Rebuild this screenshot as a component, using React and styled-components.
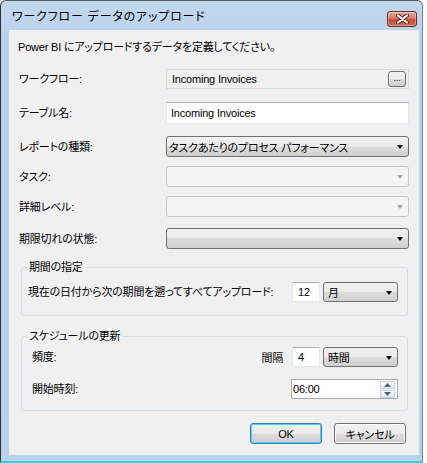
import React from 'react';
import styled, { createGlobalStyle } from 'styled-components';

const uiFont = `"Liberation Sans", "Noto Sans CJK JP", sans-serif`;

const GlobalStyle = createGlobalStyle`
    html, body {
        margin: 0;
        padding: 0;
        background: #ffffff;
    }
    body {
        font-family: ${uiFont};
        font-size: 11px;
        color: #000000;
        font-feature-settings: "palt";
        letter-spacing: -0.2px;
    }
`;

const Window = styled.div`
    box-sizing: border-box;
    width: 423px;
    height: 463px;
    display: flex;
    flex-direction: column;
    background: linear-gradient(#c3d8ef, #bad2eb 40px, #b9d1ea);
    border-left: 1px solid #2e3338;
    border-top: 1px solid #4d5862;
    border-right: 1px solid #6f8398;
    border-bottom: 2px solid #27d4e6;
    border-radius: 6px 6px 0 0;
`;

const TitleBar = styled.div`
    height: 29px;
    display: flex;
    align-items: flex-start;
    justify-content: space-between;
    padding-left: 11px;
`;

const Title = styled.div`
    font-size: 12px;
    line-height: 14px;
    margin-top: 9px;
    letter-spacing: 0.8px;
`;

const CloseButton = styled.div`
    box-sizing: border-box;
    width: 30px;
    height: 16px;
    margin-top: 10px;
    margin-right: 5px;
    display: flex;
    align-items: center;
    justify-content: center;
    border: 1px solid #6b2e28;
    border-radius: 3px;
    background: linear-gradient(#e9a99c, #d47a69 45%, #c24e38 55%, #cf6a52);
    box-shadow: inset 0 0 0 1px rgba(255, 255, 255, 0.35);
`;

const Client = styled.div`
    flex: 1;
    margin: 0 3px 6px 8px;
    background: #f0f0f0;
    padding: 10px 10px 0 9px;
    display: flex;
    flex-direction: column;
`;

const Intro = styled.div`
    line-height: 14px;
    margin-bottom: 15px;
`;

const FieldRow = styled.div`
    display: grid;
    grid-template-columns: 147px 1fr;
    align-items: center;
    margin-top: ${p => p.$mt || 0}px;
    padding-left: 1px;
`;

const Label = styled.div`
    line-height: 14px;
    white-space: nowrap;
`;

const ReadonlyField = styled.div`
    box-sizing: border-box;
    height: 20px;
    display: flex;
    align-items: center;
    justify-content: space-between;
    padding: 0 2px 0 5px;
    background: #f0f0f0;
    border: 1px solid #dcdcdc;
`;

const BrowseButton = styled.div`
    box-sizing: border-box;
    width: 18px;
    height: 16px;
    display: flex;
    align-items: center;
    justify-content: center;
    border: 1px solid #707070;
    border-radius: 3px;
    background: linear-gradient(#f2f2f2, #ebebeb 50%, #dddddd 50%, #cfcfcf);
    font-size: 9px;
    line-height: 6px;
    padding-bottom: 3px;
`;

const TextBox = styled.div`
    box-sizing: border-box;
    height: ${p => p.$h || 22}px;
    width: ${p => (p.$w ? `${p.$w}px` : 'auto')};
    display: flex;
    align-items: center;
    padding-left: ${p => (p.$pl != null ? p.$pl : 4)}px;
    background: #ffffff;
    border: 1px solid #e3e9ef;
    border-top-color: #abadb3;
`;

const Combo = styled.div`
    box-sizing: border-box;
    height: ${p => p.$h || 21}px;
    width: ${p => (p.$w ? `${p.$w}px` : 'auto')};
    display: flex;
    align-items: center;
    justify-content: space-between;
    padding: 0 5px 0 ${p => (p.$pl != null ? p.$pl : 2)}px;
    border: 1px solid ${p => (p.$disabled ? '#c4c4c4' : '#707070')};
    border-radius: 3px;
    background: ${p =>
        p.$disabled
            ? '#f4f4f4'
            : 'linear-gradient(#f2f2f2, #ebebeb 50%, #dddddd 50%, #cfcfcf)'};
    white-space: nowrap;
`;

const Arrow = styled.span`
    width: 0;
    height: 0;
    border-left: 3.5px solid transparent;
    border-right: 3.5px solid transparent;
    border-top: 4px solid ${p => (p.$disabled ? '#a8a8a8' : '#000000')};
    margin-top: 1px;
`;

const Group = styled.fieldset`
    margin: ${p => p.$mt}px 1px 0 3px;
    padding: ${p => p.$pt}px 9px ${p => p.$pb}px 6px;
    border: 1px solid #d5dfe5;
    border-radius: 3px;
    min-width: 0;
`;

const Legend = styled.legend`
    padding: 0 2px 0 1px;
    line-height: 14px;
`;

const GroupRow = styled.div`
    display: flex;
    align-items: center;
    height: 20px;
    margin-top: ${p => p.$mt || 0}px;
    padding-left: ${p => p.$indent || 0}px;
`;

const Grow = styled.div`
    flex: 1;
    line-height: 14px;
    white-space: nowrap;
`;

const Inline = styled.span`
    margin-right: 9px;
`;

const Controls = styled.div`
    display: flex;
    gap: 3px;
`;

const TimePicker = styled.div`
    box-sizing: border-box;
    width: 107px;
    height: 20px;
    display: flex;
    align-items: center;
    justify-content: space-between;
    padding: 0 2px 0 1px;
    background: #ffffff;
    border: 1px solid #a9a9a9;
`;

const Spin = styled.div`
    display: flex;
    flex-direction: column;
    gap: 1px;
`;

const SpinButton = styled.div`
    box-sizing: border-box;
    width: 15px;
    height: 8px;
    display: flex;
    align-items: center;
    justify-content: center;
    border: 1px solid #c9d2dc;
    background: linear-gradient(#f7f8fa, #e4e8ee);
`;

const ButtonRow = styled.div`
    display: flex;
    justify-content: flex-end;
    gap: 12px;
    margin-top: 12px;
    padding-right: 3px;
`;

const Button = styled.div`
    box-sizing: border-box;
    width: 72px;
    height: 21px;
    display: flex;
    align-items: center;
    justify-content: center;
    border: 1px solid ${p => (p.$default ? '#3c7fb1' : '#707070')};
    border-radius: 3px;
    background: linear-gradient(#f2f2f2, #ebebeb 50%, #dddddd 50%, #cfcfcf);
    box-shadow: ${p => (p.$default ? 'inset 0 0 0 1px #48d2f8' : 'inset 0 0 0 1px #fcfcfc')};
`;

const CloseGlyph = () => (
    <svg width="13" height="10" viewBox="0 0 13 10">
        <path d="M2 1.5 L11 8.5 M11 1.5 L2 8.5" stroke="#5a231c" strokeWidth="4" strokeLinecap="round" />
        <path d="M2 1.5 L11 8.5 M11 1.5 L2 8.5" stroke="#ffffff" strokeWidth="2.2" strokeLinecap="round" />
    </svg>
);

const SpinArrow = ({ up }) => (
    <svg width="7" height="4" viewBox="0 0 7 4">
        <path d={up ? 'M0 4 L3.5 0 L7 4 Z' : 'M0 0 L3.5 4 L7 0 Z'} fill="#4d6185" />
    </svg>
);

const App = () => (
    <>
        <GlobalStyle />
        <Window>
            <TitleBar>
                <Title>ワークフロー データのアップロード</Title>
                <CloseButton><CloseGlyph /></CloseButton>
            </TitleBar>
            <Client>
                <Intro>Power BI にアップロードするデータを定義してください。</Intro>

                <FieldRow>
                    <Label>ワークフロー:</Label>
                    <ReadonlyField>
                        <span>Incoming Invoices</span>
                        <BrowseButton>...</BrowseButton>
                    </ReadonlyField>
                </FieldRow>
                <FieldRow $mt={13}>
                    <Label>テーブル名:</Label>
                    <TextBox>Incoming Invoices</TextBox>
                </FieldRow>
                <FieldRow $mt={12}>
                    <Label>レポートの種類:</Label>
                    <Combo>
                        <span>タスクあたりのプロセス パフォーマンス</span>
                        <Arrow />
                    </Combo>
                </FieldRow>
                <FieldRow $mt={9}>
                    <Label>タスク:</Label>
                    <Combo $disabled><span /><Arrow $disabled /></Combo>
                </FieldRow>
                <FieldRow $mt={9}>
                    <Label>詳細レベル:</Label>
                    <Combo $disabled><span /><Arrow $disabled /></Combo>
                </FieldRow>
                <FieldRow $mt={11}>
                    <Label>期限切れの状態:</Label>
                    <Combo><span /><Arrow /></Combo>
                </FieldRow>

                <Group $mt={11} $pt={8} $pb={13}>
                    <Legend>期間の指定</Legend>
                    <GroupRow>
                        <Grow>現在の日付から次の期間を遡ってすべてアップロード:</Grow>
                        <Controls>
                            <TextBox $w={28} $h={20} $pl={5}>12</TextBox>
                            <Combo $w={75} $h={20} $pl={4}><span>月</span><Arrow /></Combo>
                        </Controls>
                    </GroupRow>
                </Group>

                <Group $mt={13} $pt={4} $pb={11}>
                    <Legend>スケジュールの更新</Legend>
                    <GroupRow $indent={4}>
                        <Grow>頻度:</Grow>
                        <Inline>間隔</Inline>
                        <Controls>
                            <TextBox $w={28} $h={20} $pl={5}>4</TextBox>
                            <Combo $w={75} $h={20} $pl={4}><span>時間</span><Arrow /></Combo>
                        </Controls>
                    </GroupRow>
                    <GroupRow $indent={4} $mt={12}>
                        <Grow>開始時刻:</Grow>
                        <TimePicker>
                            <span>06:00</span>
                            <Spin>
                                <SpinButton><SpinArrow up /></SpinButton>
                                <SpinButton><SpinArrow /></SpinButton>
                            </Spin>
                        </TimePicker>
                    </GroupRow>
                </Group>

                <ButtonRow>
                    <Button $default>OK</Button>
                    <Button>キャンセル</Button>
                </ButtonRow>
            </Client>
        </Window>
    </>
);

export default App;
